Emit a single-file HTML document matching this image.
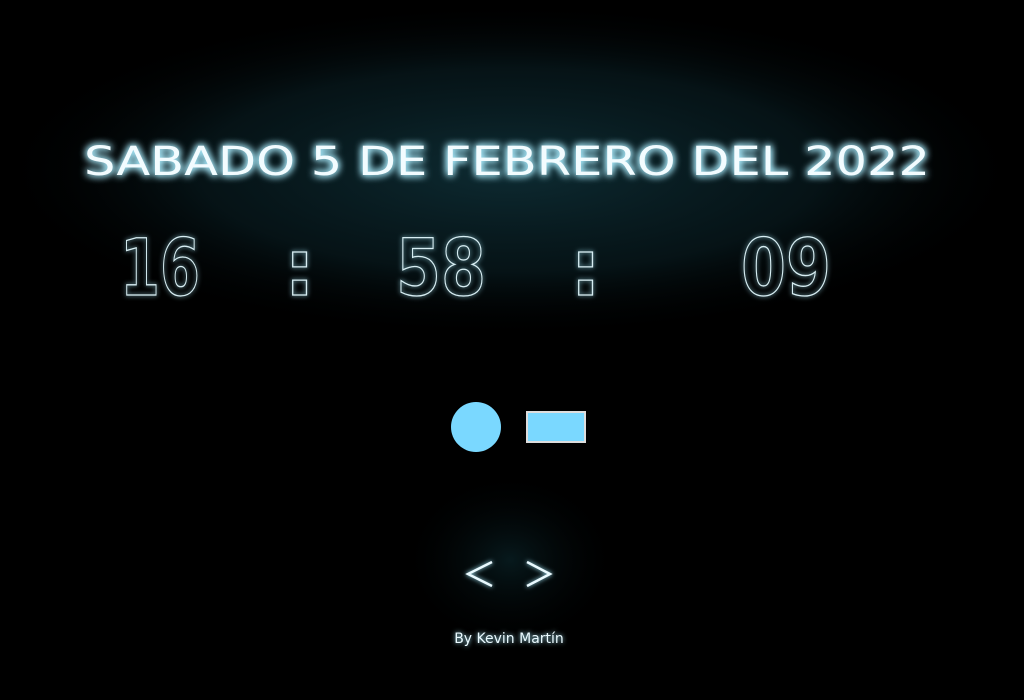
<!DOCTYPE html>
<html><head><meta charset="utf-8"><style>
html,body{margin:0;padding:0;background:#000;width:1024px;height:700px;overflow:hidden}
svg{position:absolute;left:0;top:0}
</style></head><body>
<svg width="1024" height="700" viewBox="0 0 1024 700">
<defs>
<radialGradient id="g1" cx="50%" cy="50%" r="50%">
<stop offset="0" stop-color="#0f3038" stop-opacity="0.9"/>
<stop offset="0.6" stop-color="#0a2228" stop-opacity="0.55"/>
<stop offset="1" stop-color="#000" stop-opacity="0"/>
</radialGradient>
<radialGradient id="g2" cx="50%" cy="50%" r="50%">
<stop offset="0" stop-color="#0c2a30" stop-opacity="0.6"/>
<stop offset="1" stop-color="#000" stop-opacity="0"/>
</radialGradient>
<filter id="glow" x="-20%" y="-50%" width="140%" height="200%">
<feGaussianBlur stdDeviation="4" result="b"/>
<feColorMatrix in="b" type="matrix" values="0 0 0 0 0.4  0 0 0 0 0.85  0 0 0 0 1  0 0 0 1.2 0" result="c"/>
<feMerge><feMergeNode in="c"/><feMergeNode in="c"/><feMergeNode in="SourceGraphic"/></feMerge>
</filter>
<filter id="glow2" x="-20%" y="-50%" width="140%" height="200%">
<feGaussianBlur stdDeviation="2.5" result="b"/>
<feColorMatrix in="b" type="matrix" values="0 0 0 0 0.4  0 0 0 0 0.85  0 0 0 0 1  0 0 0 1 0" result="c"/>
<feMerge><feMergeNode in="c"/><feMergeNode in="SourceGraphic"/></feMerge>
</filter>
</defs>
<ellipse cx="510" cy="170" rx="520" ry="170" fill="url(#g1)"/>
<ellipse cx="510" cy="560" rx="110" ry="90" fill="url(#g2)"/>
<text x="84" y="175" textLength="846" lengthAdjust="spacingAndGlyphs" font-family="DejaVu Sans, sans-serif" font-size="40" fill="#f2fcff" filter="url(#glow)">SABADO 5 DE FEBRERO DEL 2022</text>
<g font-family="DejaVu Sans, sans-serif" font-weight="bold" font-size="78" fill="none" stroke="#d8eef3" stroke-width="1.3" filter="url(#glow2)">
<text x="120" y="295" textLength="80" lengthAdjust="spacingAndGlyphs">16</text>
<text x="284" y="295">:</text>
<text x="396" y="295" textLength="90" lengthAdjust="spacingAndGlyphs">58</text>
<text x="570" y="295">:</text>
<text x="741" y="295" textLength="90" lengthAdjust="spacingAndGlyphs">09</text>
</g>
<circle cx="476" cy="427" r="25" fill="#7ad8ff"/>
<rect x="527" y="412" width="58" height="30" fill="#7ad8ff" stroke="#ddd" stroke-width="2"/>
<g stroke="#eafaff" stroke-width="2.5" fill="none" filter="url(#glow2)">
<path d="M492 562 L468 574 L492 586"/>
<path d="M527 562 L550 574 L527 586"/>
</g>
<text x="509" y="643" text-anchor="middle" font-family="DejaVu Sans, sans-serif" font-size="14" fill="#eafaff" filter="url(#glow2)">By Kevin Martín</text>
</svg>
</body></html>
